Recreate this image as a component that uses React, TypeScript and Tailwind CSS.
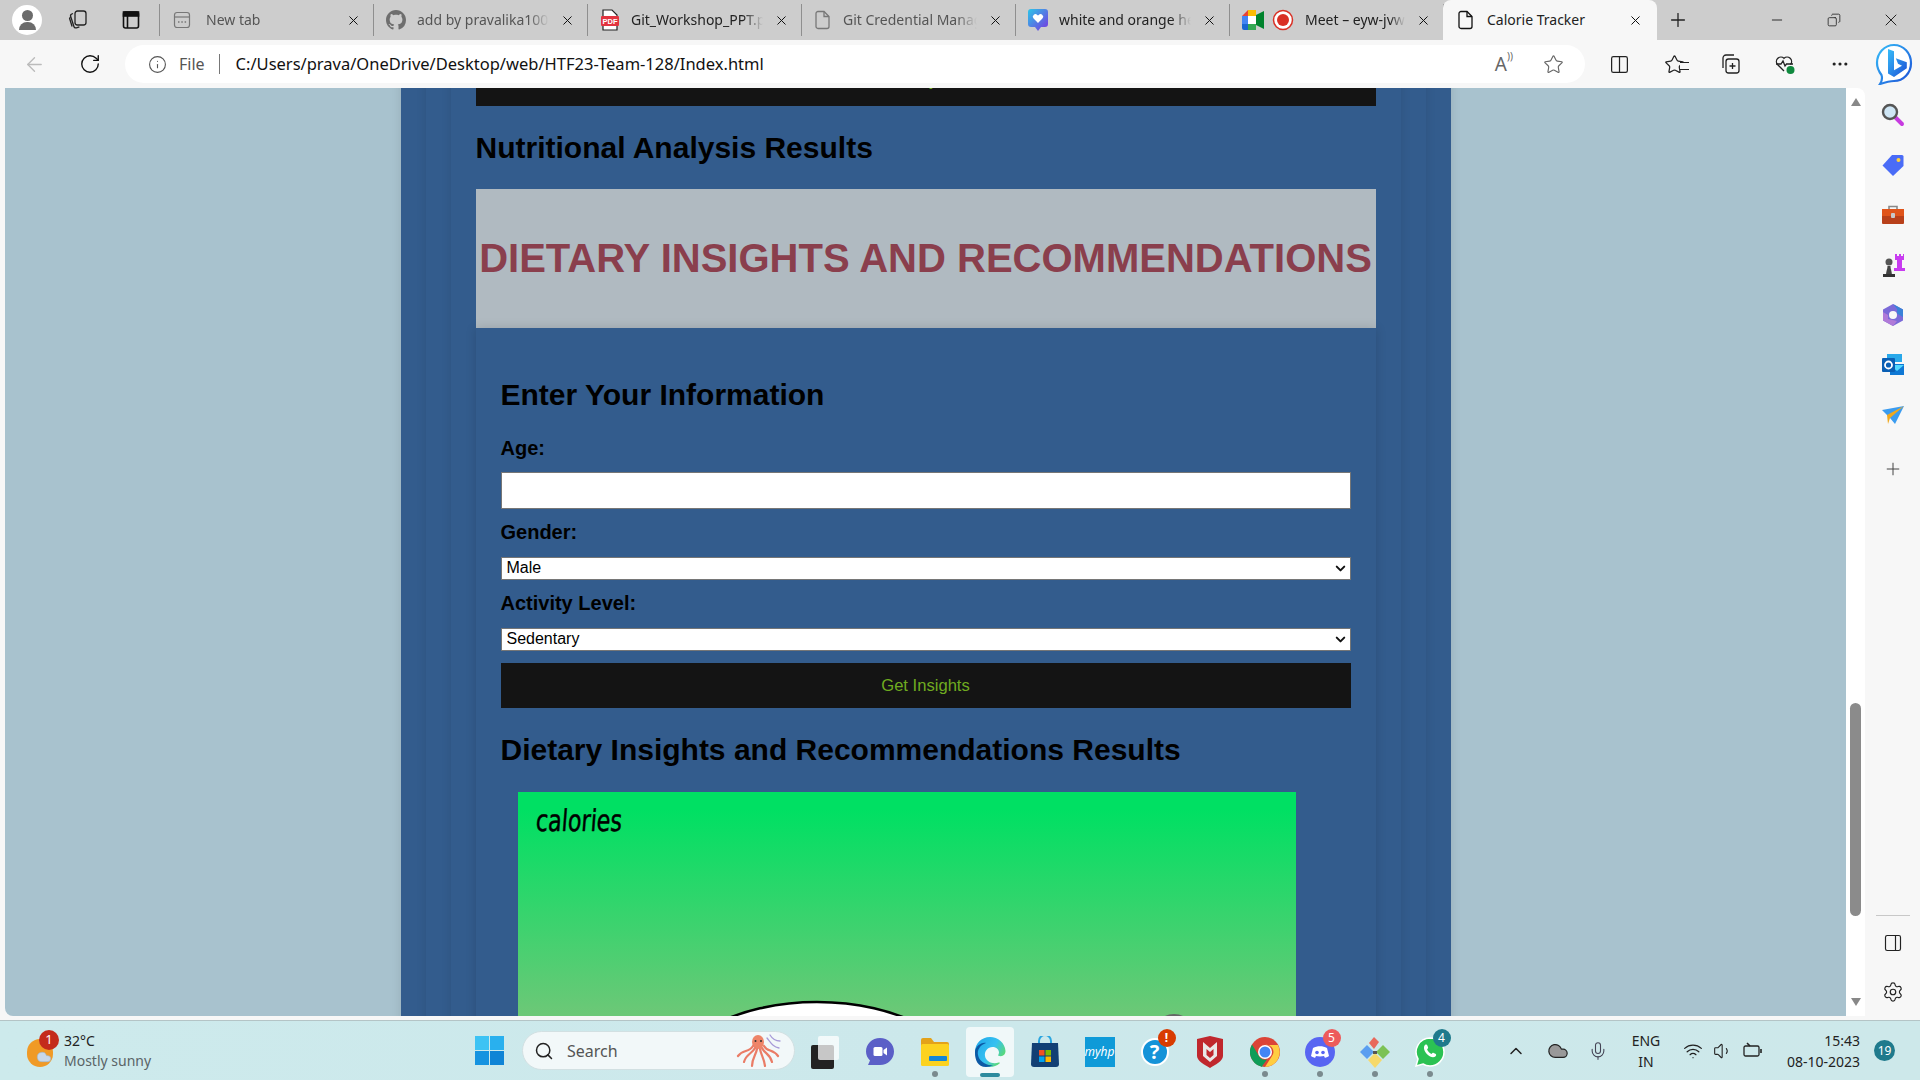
import type { ReactNode } from "react";
import {
  ArrowLeft,
  ChevronDown,
  ChevronUp,
  Cloud,
  Columns2,
  Copy,
  Info,
  Mic,
  Minus,
  MoreHorizontal,
  PanelRight,
  Plus,
  RotateCw,
  Search,
  Settings,
  Star,
  Volume1,
  Wifi,
  X,
} from "lucide-react";

const FileIcon = () => (
  <svg width="18" height="20" viewBox="0 0 18 20" fill="none" stroke="currentColor" strokeWidth="1.3">
    <path d="M4 1.5h6l5 5v10a2 2 0 0 1-2 2H4a2 2 0 0 1-2-2v-13a2 2 0 0 1 2-2z" />
    <path d="M10 1.5v5h5" />
  </svg>
);

const NewTabIcon = () => (
  <svg className="ml-px mr-1" width="18" height="18" viewBox="0 0 18 18" fill="none" stroke="#777" strokeWidth="1.2">
    <rect x="1.5" y="1.5" width="15" height="15" rx="2.5" />
    <path d="M1.5 6h15" />
    <path d="M5 11h1.5M8.3 11h1.5M11.6 11h1.5" strokeWidth="1.6" />
  </svg>
);

const GithubIcon = () => (
  <svg width="20" height="20" viewBox="0 0 16 16" fill="#6e6e6e">
    <path d="M8 0C3.58 0 0 3.58 0 8c0 3.54 2.29 6.53 5.47 7.59.4.07.55-.17.55-.38 0-.19-.01-.82-.01-1.49-2.01.37-2.53-.49-2.69-.94-.09-.23-.48-.94-.82-1.13-.28-.15-.68-.52-.01-.53.63-.01 1.08.58 1.23.82.72 1.21 1.87.87 2.33.66.07-.52.28-.87.51-1.07-1.78-.2-3.64-.89-3.64-3.95 0-.87.31-1.59.82-2.15-.08-.2-.36-1.02.08-2.12 0 0 .67-.21 2.2.82.64-.18 1.32-.27 2-.27s1.36.09 2 .27c1.53-1.04 2.2-.82 2.2-.82.44 1.1.16 1.92.08 2.12.51.56.82 1.27.82 2.15 0 3.07-1.87 3.75-3.65 3.95.29.25.54.73.54 1.48 0 1.07-.01 1.93-.01 2.2 0 .21.15.46.55.38A8.01 8.01 0 0 0 16 8c0-4.42-3.58-8-8-8z" />
  </svg>
);

const PdfIcon = () => (
  <svg width="20" height="22" viewBox="0 0 20 22">
    <path d="M3 1h9l5 5v15H3z" fill="#fff" stroke="#222" strokeWidth="1.2" />
    <rect x="1" y="7" width="18" height="10" rx="1" fill="#e2343f" />
    <text x="10" y="15" textAnchor="middle" fontSize="7.5" fontWeight="700" fill="#fff" fontFamily="Liberation Sans, sans-serif">PDF</text>
  </svg>
);

const HeartBadgeIcon = () => (
  <svg width="20" height="22" viewBox="0 0 20 22">
    <defs>
      <linearGradient id="hb" x1="0" y1="0" x2="1" y2="1">
        <stop offset="0" stopColor="#2bc6e8" />
        <stop offset="1" stopColor="#7a34e0" />
      </linearGradient>
    </defs>
    <path d="M3 0h14a3 3 0 0 1 3 3v12a3 3 0 0 1-3 3h-4l-3 4-3-4H3a3 3 0 0 1-3-3V3a3 3 0 0 1 3-3z" fill="url(#hb)" />
    <path d="M10 14 5.6 9.6a2.6 2.6 0 0 1 3.7-3.7l.7.7.7-.7a2.6 2.6 0 0 1 3.7 3.7z" fill="#fff" />
  </svg>
);

const MeetIcon = () => (
  <svg width="22" height="20" viewBox="0 0 22 20">
    <path d="M0 6 6 0h8v6H6v4H0z" fill="#ea4335" />
    <path d="M6 0h8v6H6z" fill="#fbbc04" />
    <path d="M0 6h6v8H0z" fill="#4285f4" />
    <path d="M0 14h6v6H2a2 2 0 0 1-2-2z" fill="#1967d2" />
    <path d="M6 14h8v6H6z" fill="#34a853" />
    <path d="M14 5l8-4v18l-8-4z" fill="#00832d" />
    <path d="M14 6v8H6V6z" fill="#fff" />
  </svg>
);

const RecordIcon = () => (
  <svg width="22" height="22" viewBox="0 0 22 22">
    <circle cx="11" cy="11" r="9.5" fill="#fff" stroke="#d93025" strokeWidth="1.5" />
    <circle cx="11" cy="11" r="6" fill="#d93025" />
  </svg>
);

const tabs: { title: string; icons: ReactNode[]; text: string; active?: boolean }[] = [
  { title: "New tab", icons: [<NewTabIcon key="n" />], text: "text-[#555]" },
  { title: "add by pravalika100", icons: [<GithubIcon key="g" />], text: "text-[#555]" },
  { title: "Git_Workshop_PPT.pptx", icons: [<PdfIcon key="p" />], text: "text-[#222]" },
  { title: "Git Credential Manager", icons: [<span key="f" className="text-[#777]"><FileIcon /></span>], text: "text-[#555]" },
  { title: "white and orange heart", icons: [<HeartBadgeIcon key="h" />], text: "text-[#222]" },
  { title: "Meet – eyw-jvwx-abc", icons: [<MeetIcon key="m" />, <RecordIcon key="r" />], text: "text-[#222]" },
];

function BrowserTab({ title, icons, text }: { title: string; icons: ReactNode[]; text: string }) {
  return (
    <div className="w-[214px] h-8 flex items-center gap-[11px] pl-3 pr-3 border-r border-[#8f8f8f]">
      <div className="flex items-center gap-2 shrink-0">{icons}</div>
      <span className={`flex-1 min-w-0 whitespace-nowrap overflow-hidden text-[14px] leading-[18px] [mask-image:linear-gradient(to_right,black_85%,transparent)] ${text}`}>
        {title}
      </span>
      <X className="w-[15px] h-[15px] text-[#111] shrink-0" strokeWidth={1.6} />
    </div>
  );
}

function TabBar() {
  return (
    <div className="h-10 shrink-0 bg-[#cdcdcd] flex items-center">
      <div className="w-[54px] flex justify-center">
        <div className="w-[30px] h-[30px] rounded-full bg-white flex flex-col items-center justify-center overflow-hidden">
          <div className="w-[11px] h-[11px] rounded-full bg-[#6b6b6b]" />
          <div className="w-[17px] h-[8px] rounded-t-full bg-[#6b6b6b] mt-[1px]" />
        </div>
      </div>
      <div className="w-12 flex justify-center">
        <svg width="22" height="22" viewBox="0 0 22 22" fill="none" stroke="#222" strokeWidth="1.3">
          <rect x="8" y="2" width="11" height="14" rx="2.5" />
          <path d="M6 4.5 4.8 5a2 2 0 0 0-1.1 2.5l3.2 10a2 2 0 0 0 2.5 1.3l3-1" />
          <path d="M3.4 8 2.6 9.5l2.5 8" />
        </svg>
      </div>
      <div className="w-[57px] flex justify-center">
        <svg width="20" height="20" viewBox="0 0 20 20" fill="none" stroke="#111" strokeWidth="1.6">
          <rect x="2.5" y="2" width="15" height="16" rx="2" />
          <rect x="2.5" y="2" width="15" height="4" fill="#111" />
          <path d="M6.5 6v12" />
        </svg>
      </div>
      {/* divider + inactive tabs */}
      <div className="flex items-center border-l border-[#8f8f8f] h-8">
        {tabs.map((t) => (
          <BrowserTab key={t.title} {...t} />
        ))}
      </div>
      <div className="self-stretch w-[214px] bg-[#f7f7f7] rounded-t-lg flex items-center gap-2 pl-3.5 pr-3.5 -ml-px">
        <span className="text-[#111] shrink-0"><FileIcon /></span>
        <span className="flex-1 text-[14px] leading-[18px] text-[#222] ml-1 whitespace-nowrap">Calorie Tracker</span>
        <X className="w-[15px] h-[15px] text-[#111]" strokeWidth={1.6} />
      </div>
      <div className="w-[42px] flex justify-center">
        <Plus className="w-[22px] h-[22px] text-[#222]" strokeWidth={1.4} />
      </div>
      <div className="flex-1 flex items-center justify-end">
        <div className="w-[57px] flex justify-center"><Minus className="w-4 h-4 text-[#222]" strokeWidth={1.4} /></div>
        <div className="w-[57px] flex justify-center"><Copy className="w-[14px] h-[14px] text-[#222] -scale-x-100" strokeWidth={1.4} /></div>
        <div className="w-[58px] flex justify-center"><X className="w-[20px] h-[20px] text-[#222]" strokeWidth={1.2} /></div>
      </div>
    </div>
  );
}

function ToolbarIcon({ children }: { children: ReactNode }) {
  return <div className="w-[55px] flex justify-center text-[#222]">{children}</div>;
}

function BingIcon() {
  return (
    <svg width="38" height="42" viewBox="0 0 38 42">
      <defs>
        <linearGradient id="bing" x1="0" y1="0" x2="1" y2="1">
          <stop offset="0" stopColor="#37bdf8" />
          <stop offset="1" stopColor="#1b4fd6" />
        </linearGradient>
      </defs>
      <path d="M19 2c9.5 0 17 8 17 18s-7.500 18-17 18c-2.500 0-8 1-14 3 2-3 2.500-6 1.500-9C3.500 28 2 24 2 20 2 10 9.500 2 19 2z" fill="#fff" stroke="url(#bing)" strokeWidth="2.200" />
      <path d="M13 6l6 2.200v19l8-4.500-4-2-2.200-5.500 11 4v6L19 34l-6-3.500z" fill="url(#bing)" />
    </svg>
  );
}

function Toolbar() {
  return (
    <div className="h-12 shrink-0 bg-[#f7f7f7] flex items-center">
      <div className="w-[68px] flex justify-center">
        <ArrowLeft className="w-[23px] h-[23px] text-[#bbb]" strokeWidth={1.4} />
      </div>
      <div className="w-[44px] flex justify-center">
        <RotateCw className="w-[22px] h-[22px] text-[#111]" strokeWidth={1.5} />
      </div>
      <div className="ml-[13px] w-[1460px] h-[38px] bg-white rounded-full flex items-center pl-[23px] pr-[21px]">
        <Info className="w-[19px] h-[19px] text-[#555]" strokeWidth={1.4} />
        <span className="ml-[12px] text-[16px] text-[#555]">File</span>
        <span className="ml-[14px] w-px h-5 bg-[#777]" />
        <span className="ml-[16px] text-[16.5px] text-[#111]">C:/Users/prava/OneDrive/Desktop/web/HTF23-Team-128/Index.html</span>
        <div className="ml-auto flex items-center gap-[30px] text-[#666]">
          <span className="text-[19px] leading-none relative pr-1.5">A<span className="absolute -top-1 right-0 text-[10px]">))</span></span>
          <Star className="w-[21px] h-[21px]" strokeWidth={1.3} />
        </div>
      </div>
      <div className="flex items-center ml-[7px]">
        <ToolbarIcon><Columns2 className="w-[21px] h-[21px]" strokeWidth={1.4} /></ToolbarIcon>
        <ToolbarIcon>
          <div className="relative">
            <Star className="w-[21px] h-[21px]" strokeWidth={1.4} />
            <div className="absolute right-[-4px] top-[8px] w-[9px] h-[8px] border-y border-[#222] bg-[#f7f7f7]" />
          </div>
        </ToolbarIcon>
        <ToolbarIcon>
          <svg width="22" height="22" viewBox="0 0 22 22" fill="none" stroke="#222" strokeWidth="1.3">
            <rect x="7" y="6" width="13" height="14" rx="2.5" />
            <path d="M4 15V5a3 3 0 0 1 3-3h8M13.500 10v6M10.500 13h6" />
          </svg>
        </ToolbarIcon>
        <ToolbarIcon>
          <svg width="24" height="24" viewBox="0 0 24 24" fill="none" stroke="#222" strokeWidth="1.3">
            <path d="M11 19 4.500 12.500a4.500 4.500 0 0 1 6.500-6.200 4.500 4.500 0 0 1 6.500 6.200" />
            <path d="M3 12h5l2-3 2 5 1.500-2H20" />
            <circle cx="17.500" cy="18" r="4" fill="#10893e" stroke="none" />
          </svg>
        </ToolbarIcon>
        <ToolbarIcon><MoreHorizontal className="w-[20px] h-[20px]" strokeWidth={1.8} /></ToolbarIcon>
        <div className="w-[53px] flex justify-center"><BingIcon /></div>
      </div>
    </div>
  );
}

function SelectField({ value, other }: { value: string; other: string }) {
  return (
    <div className="relative mt-[13px] w-[850px] h-[23px]">
      <select defaultValue={value} className="block w-full h-full appearance-none bg-white border border-[#767676] text-[16px] leading-[18px] text-black pl-[5px] pb-[2px]">
        <option>{value}</option>
        <option>{other}</option>
      </select>
      <ChevronDown className="absolute right-[3px] top-[4px] w-[15px] h-[15px] text-[#111] pointer-events-none" strokeWidth={3.2} />
    </div>
  );
}

function InsightsForm() {
  return (
    <div className="px-[25px] pt-12 shadow-[0_0_10px_rgba(0,0,0,0.15)]">
      <h2 className="text-[30px] leading-[37px] font-bold text-black">Enter Your Information</h2>
      <label className="block mt-[24px] text-[20px] leading-[23px] font-bold text-black">Age:</label>
      <input type="text" className="block mt-[12px] w-[850px] h-[37px] bg-white border border-[#767676]" />
      <label className="block mt-[12px] text-[20px] leading-[23px] font-bold text-black">Gender:</label>
      <SelectField value="Male" other="Female" />
      <label className="block mt-[12px] text-[20px] leading-[23px] font-bold text-black">Activity Level:</label>
      <SelectField value="Sedentary" other="Active" />
      <button className="block mt-3 w-[850px] h-[45px] pt-px bg-[#141414] text-[16.6px] text-[#6fab20]">Get Insights</button>
      <h2 className="mt-[23px] text-[30px] leading-[37px] font-bold text-black">Dietary Insights and Recommendations Results</h2>
      <div className="relative mt-6 ml-[17px] w-[778px] h-[300px] bg-[linear-gradient(to_bottom,#00e063_0%,#00e063_6%,#6cc877_74%)] pl-[18px] pt-[10px]">
        <span className="block origin-left scale-x-[0.74] -skew-x-6 text-[30px] leading-[38px] font-['DejaVu_Sans',sans-serif] text-black [-webkit-text-stroke:0.5px_black]">calories</span>
        {/* chart shapes, cut off by the fold */}
        <svg className="absolute left-0 top-0" width="778" height="300" viewBox="0 0 778 300">
          <ellipse cx="299" cy="300" rx="155" ry="90" fill="#fff" stroke="#000" strokeWidth="2.5" />
          <ellipse cx="656" cy="232" rx="15" ry="10" fill="#666" />
        </svg>
      </div>
    </div>
  );
}

function Page() {
  return (
    <div className="flex-1 min-w-0 overflow-hidden bg-[#a8c2ce]">
      <div className="mx-auto w-[1050px] px-[25px] bg-[#335c8d] shadow-[0_0_10px_rgba(0,0,0,0.1)]">
        <div className="px-[25px] shadow-[0_0_10px_rgba(0,0,0,0.1)]">
          <div className="px-[25px] shadow-[0_0_10px_rgba(0,0,0,0.1)]">
            <div className="-mt-[27px]">
              <button className="block w-[900px] h-[45px] pb-1.5 bg-[#141414] text-[16px] text-[#6fab20]">Analyze</button>
              <h2 className="mt-[23px] text-[30px] leading-[37px] font-bold text-black">Nutritional Analysis Results</h2>
              <div className="mt-[23px] h-[139px] pb-[2px] bg-[#b0bac1] flex items-center justify-center">
                <h1 className="text-[40px] font-bold text-[#8a3f4d] whitespace-nowrap">DIETARY INSIGHTS AND RECOMMENDATIONS</h1>
              </div>
              <InsightsForm />
            </div>
          </div>
        </div>
      </div>
    </div>
  );
}

function Scrollbar() {
  return (
    <div className="w-[19px] shrink-0 bg-white flex flex-col items-center py-[10px]">
      <div className="w-0 h-0 border-x-[5px] border-x-transparent border-b-[8px] border-b-[#888]" />
      <div className="mt-[597px] w-[11px] h-[213px] rounded-full bg-[#8b8b8b]" />
      <div className="mt-auto w-0 h-0 border-x-[5px] border-x-transparent border-t-[8px] border-t-[#888]" />
    </div>
  );
}

function SideBar() {
  return (
    <div className="w-[55px] shrink-0 flex flex-col items-center pt-[2px] pb-[17px]">
      <div className="h-[50px] flex items-center justify-center">
        <svg width="24" height="24" viewBox="0 0 24 24">
          <path d="M14 14l7 7" stroke="#c73be0" strokeWidth="4" strokeLinecap="round" />
          <circle cx="9" cy="9" r="7" fill="#cfe6f5" stroke="#555" strokeWidth="2.4" />
        </svg>
      </div>
      <div className="h-[50px] flex items-center justify-center">
        <svg width="24" height="24" viewBox="0 0 24 24">
          <path d="M11 2h10a1.500 1.500 0 0 1 1.500 1.500V13L12 23 1.500 12.500z" fill="#4a6cf7" />
          <circle cx="17.500" cy="7" r="2" fill="#ffd23f" />
        </svg>
      </div>
      <div className="h-[50px] flex items-center justify-center">
        <svg width="24" height="22" viewBox="0 0 24 22">
          <path d="M8 5V2.500h8V5" fill="none" stroke="#888" strokeWidth="1.6" />
          <path d="M1 5h22v7H1z" fill="#e0541a" />
          <path d="M1 12h22v7a1 1 0 0 1-1 1H2a1 1 0 0 1-1-1z" fill="#b8401a" />
          <rect x="10" y="9" width="4" height="5" rx="1" fill="#c8c8c8" />
        </svg>
      </div>
      <div className="h-[50px] flex items-center justify-center">
        <svg width="24" height="24" viewBox="0 0 24 24">
          <circle cx="8" cy="9" r="3.500" fill="#555" />
          <path d="M5 23c0-5 1.500-7 1.500-10h3c0 3 1.500 5 1.500 10z" fill="#444" />
          <path d="M2 21h12v3H2z" fill="#333" />
          <path d="M14 1h2v2h2V1h2v2h2V1h1v6h-2v8h3v3H13v-3h3V7h-2z" fill="#c83cf0" />
        </svg>
      </div>
      <div className="h-[50px] flex items-center justify-center">
        <svg width="24" height="24" viewBox="0 0 24 24">
          <path d="M12 1 22 6.500v11L12 23 2 17.500v-11z" fill="#7b6ad8" />
          <path d="M12 1 22 6.500V14l-6-3.500V6z" fill="#3a82d8" />
          <path d="M2 17.500V9l5 3v4l9 2-4 5z" fill="#b07ad8" />
          <circle cx="12" cy="12" r="4" fill="#f7f7f7" />
        </svg>
      </div>
      <div className="h-[50px] flex items-center justify-center">
        <svg width="24" height="24" viewBox="0 0 24 24">
          <rect x="6" y="1" width="15" height="8" fill="#28a8ea" />
          <path d="M9 11 23 11v11H9z" fill="#0f78d4" />
          <path d="M9 12l14 0-7 6z" fill="#50d9ff" />
          <rect x="1" y="5" width="13" height="14" rx="1" fill="#0a5fb4" />
          <circle cx="7.500" cy="12" r="3.500" fill="none" stroke="#fff" strokeWidth="1.800" />
        </svg>
      </div>
      <div className="h-[50px] flex items-center justify-center">
        <svg width="24" height="20" viewBox="0 0 24 20">
          <path d="M1 5 23 1 14 19 9 13z" fill="#3b9cf0" />
          <path d="M6 10 23 1 9 13l-2 6z" fill="#f0a91e" />
        </svg>
      </div>
      <div className="h-[58px] flex items-center justify-center">
        <Plus className="w-[20px] h-[20px] text-[#444]" strokeWidth={1.2} />
      </div>
      <div className="mt-auto w-[34px] h-px bg-[#c8c8c8]" />
      <div className="mt-[17px]"><PanelRight className="w-[20px] h-[20px] text-[#222]" strokeWidth={1.4} /></div>
      <div className="mt-[28px]"><Settings className="w-[22px] h-[22px] text-[#222]" strokeWidth={1.3} /></div>
    </div>
  );
}

function TaskIcon({ children, dot, active, badge, badgeColor }: { children: ReactNode; dot?: boolean; active?: boolean; badge?: string; badgeColor?: string }) {
  return (
    <div className={`relative w-[48px] mx-[3.500px] h-[50px] flex items-center justify-center rounded ${active ? "bg-white/70" : ""}`}>
      {children}
      {badge && (
        <div className={`absolute top-[2px] right-[3px] w-[18px] h-[18px] rounded-full text-white text-[12px] flex items-center justify-center ${badgeColor}`}>
          {badge}
        </div>
      )}
      {dot && <div className="absolute bottom-0 w-[6px] h-[6px] rounded-full bg-[#7a8a8e]" />}
      {active && <div className="absolute bottom-0 w-[20px] h-[4px] rounded-full bg-[#2b8a9e]" />}
    </div>
  );
}

function Taskbar() {
  return (
    <div className="h-[60px] shrink-0 bg-[linear-gradient(to_right,#cdeaec,#cce8eb_50%,#cde8ea)] border-t border-[#b4c4c6] flex items-center relative">
      <div className="w-[475px] shrink-0 flex items-center pl-[27px]">
        <div className="relative w-[37px] h-[32px]">
          <div className="absolute left-0 top-1 w-[26px] h-[28px] rounded-full bg-[#f09a26]" />
          <Cloud className="absolute left-[8px] top-[14px] w-[18px] h-[16px] text-[#9fb9d4] fill-[#c8d8ea]" strokeWidth={1} />
          <div className="absolute left-[12px] -top-[5px] w-5 h-5 rounded-full bg-[#c42b1c] text-white text-[13px] flex items-center justify-center">1</div>
        </div>
        <div className="text-[14px] leading-[20px] pt-[1px]">
          <div className="text-[#222]">32°C</div>
          <div className="text-[#5a6467]">Mostly sunny</div>
        </div>
      </div>
      <div className="w-[47px] shrink-0">
        <svg width="29" height="29" viewBox="0 0 29 29">
          <rect x="0" y="0" width="14" height="14" fill="#3cc3f4" />
          <rect x="15" y="0" width="14" height="14" fill="#29b0ee" />
          <rect x="0" y="15" width="14" height="14" fill="#1593e0" />
          <rect x="15" y="15" width="14" height="14" fill="#0f84d6" />
        </svg>
      </div>
      <div className="w-[273px] h-[39px] shrink-0 bg-[#f2f8f9] rounded-full border border-[#d2e0e2] flex items-center pl-[11px] pr-[10px]">
        <Search className="w-[20px] h-[20px] text-[#222]" strokeWidth={1.8} />
        <span className="ml-[13px] text-[16px] text-[#555]">Search</span>
        <svg className="ml-auto" width="50" height="38" viewBox="0 0 50 38" fill="none" stroke="#ea7c66" strokeWidth="2.200" strokeLinecap="round">
          <path d="M33 6c4 5 6 9 12 10M36 3c3 5 6 6 10 6" stroke="#a79ad8" strokeWidth="1.300" />
          <ellipse cx="24" cy="10" rx="6" ry="7" fill="#ee8468" stroke="none" />
          <path d="M19 14c-4 7-10 3-15 10M21 16c-3 6-9 6-11 14M23 17c-1 6-5 9-5 17M26 17c1 6 4 9 5 17M28 16c3 6 8 6 10 14M30 14c3 6 9 3 14 10" />
          <circle cx="21.500" cy="9" r="1" fill="#333" stroke="none" />
          <circle cx="27" cy="9" r="1" fill="#333" stroke="none" />
        </svg>
      </div>
      <div className="flex items-center ml-[2px] pt-[2px]">
        <TaskIcon>
          <svg width="30" height="36" viewBox="0 0 30 36">
            <rect x="1" y="11" width="23" height="24" rx="2" fill="#222" />
            <rect x="8" y="2" width="21" height="24" rx="2" fill="#fff" opacity="0.75" />
          </svg>
        </TaskIcon>
        <TaskIcon>
          <svg width="30" height="30" viewBox="0 0 30 30">
            <path d="M15 1c8 0 14 6 14 13.500S23 28 15 28H3l2-4.500C2.500 21 1 18 1 14.500 1 7 7 1 15 1z" fill="#5b5fc7" />
            <rect x="8.500" y="10" width="9" height="9" rx="1.500" fill="#fff" />
            <path d="M18.500 13 22 10.500v8L18.500 16z" fill="#fff" />
          </svg>
        </TaskIcon>
        <TaskIcon dot>
          <svg width="30" height="30" viewBox="0 0 30 30">
            <path d="M1 3a2 2 0 0 1 2-2h8l3 4h13a2 2 0 0 1 2 2v3H1z" fill="#e3a21a" />
            <rect x="1" y="7" width="28" height="22" rx="1.500" fill="#fcd21f" />
            <rect x="9" y="19" width="18" height="5" rx="1" fill="#1586d6" />
          </svg>
        </TaskIcon>
        <TaskIcon active>
          <svg width="32" height="32" viewBox="0 0 32 32">
            <defs>
              <linearGradient id="edge" x1="0" y1="0" x2="1" y2="0.600">
                <stop offset="0" stopColor="#1fa5e8" />
                <stop offset="0.600" stopColor="#35c1f1" />
                <stop offset="1" stopColor="#5fdc6a" />
              </linearGradient>
            </defs>
            <path d="M16 1C7.500 1 1 7.500 1 16c0 8.500 6.500 15 15 15 3.500 0 7-1.300 9.500-3.500.7-.7 0-1.300-.8-1-5.700 2-12.700-.5-13.700-6.500-.8-5 3-9 7.500-9 4 0 6.500 2.500 6.500 5.500 0 1-.5 2-1 3 4 2 7.500-.5 7.500-4.500C31 7 24 1 16 1z" fill="url(#edge)" />
            <path d="M1 16c0-5 6-10 11-9-6 2-9 7-8 12 1 6 8 11 15 10-2 1-4 2-7 2-8.500 0-11-7-11-15z" fill="#0c59a4" />
          </svg>
        </TaskIcon>
        <TaskIcon>
          <svg width="30" height="32" viewBox="0 0 30 32">
            <path d="M9 8V5a6 6 0 0 1 12 0v3" fill="none" stroke="#2aa5e0" strokeWidth="2" />
            <path d="M2 7h26l1 21a3 3 0 0 1-3 3H4a3 3 0 0 1-3-3z" fill="#123f74" />
            <rect x="9" y="14" width="5.500" height="5.500" fill="#f25022" />
            <rect x="15.500" y="14" width="5.500" height="5.500" fill="#7fba00" />
            <rect x="9" y="20.500" width="5.500" height="5.500" fill="#00a4ef" />
            <rect x="15.500" y="20.500" width="5.500" height="5.500" fill="#ffb900" />
          </svg>
        </TaskIcon>
        <TaskIcon>
          <div className="w-[30px] h-[30px] bg-[#0f9ad8] flex items-center justify-center text-white text-[12px] italic">myhp</div>
        </TaskIcon>
        <TaskIcon badge="!" badgeColor="bg-[#d83b01] font-bold top-[0px]">
          <div className="w-[28px] h-[28px] rounded-full bg-[#1593d8] border-2 border-white text-white text-[20px] font-bold flex items-center justify-center">?</div>
        </TaskIcon>
        <TaskIcon>
          <svg width="28" height="32" viewBox="0 0 28 32">
            <path d="M1 3 14 0l13 3v17c0 5-8 9-13 12C9 29 1 25 1 20z" fill="#c0272d" />
            <path d="M7 6l7 6 7-6v14l-7 6-7-6z" fill="#e8e8e8" />
            <path d="M10.500 13l3.500 3 3.500-3v6L14 22l-3.500-3z" fill="#c0272d" />
          </svg>
        </TaskIcon>
        <TaskIcon dot>
          <svg width="30" height="30" viewBox="0 0 30 30">
            <circle cx="15" cy="15" r="15" fill="#db4437" />
            <path d="M15 30A15 15 0 0 1 2 7.500L9 19a7 7 0 0 0 8 3.500L11.500 30z" fill="#0f9d58" />
            <path d="M15 8h13a15 15 0 0 1-13 22l7-11a7 7 0 0 0-7-11z" fill="#ffcd40" />
            <circle cx="15" cy="15" r="7" fill="#fff" />
            <circle cx="15" cy="15" r="5.500" fill="#4285f4" />
          </svg>
        </TaskIcon>
        <TaskIcon dot badge="5" badgeColor="bg-[#ed5b5b]">
          <svg width="30" height="30" viewBox="0 0 30 30">
            <circle cx="15" cy="15" r="15" fill="#5865f2" />
            <path d="M8 11c4-2.500 10-2.500 14 0l2 8c-1.500 1-3 1.500-4 2l-1-2c-2 .6-6 .6-8 0l-1 2c-1-.5-2.500-1-4-2z" fill="#fff" />
            <circle cx="12" cy="15.500" r="1.800" fill="#5865f2" />
            <circle cx="18" cy="15.500" r="1.800" fill="#5865f2" />
          </svg>
        </TaskIcon>
        <TaskIcon dot>
          <svg width="32" height="32" viewBox="0 0 32 32">
            <path d="M1 16l7-7 7 7-7 7z" fill="#5b9ef0" />
            <path d="M17 16l7-7 7 7-7 7z" fill="#7cc255" />
            <path d="M9 24l7-7 7 7-7 8z" fill="#f6d96a" />
            <path d="M10 7l5-6 5 5-5 7z" fill="#e8685b" />
            <path d="M14 15h4v3h-4z" fill="#555" />
          </svg>
        </TaskIcon>
        <TaskIcon dot badge="4" badgeColor="bg-[#1f7a8c]">
          <svg width="30" height="30" viewBox="0 0 30 30">
            <path d="M15 1a14 14 0 0 1 0 28c-2.500 0-5-.7-7-2l-7 2 2-7A14 14 0 0 1 15 1z" fill="#2bc253" stroke="#fff" strokeWidth="1.500" />
            <path d="M10 8c1-.8 2-.5 2.500.8l.6 1.600c.2.700-.7 1.500-1 2 1 2 2.500 3.500 4.500 4.500.6-.5 1.300-1.300 2-1l1.800.8c1 .5 1 1.700.2 2.500-2 2-5.500 1-8.500-2S8 10 10 8z" fill="#fff" />
          </svg>
        </TaskIcon>
      </div>
      <div className="ml-auto flex items-center h-full text-[#222]">
        <ChevronUp className="w-[20px] h-[20px] mr-[21px]" strokeWidth={1.8} />
        <Cloud className="w-[22px] h-[22px] mr-[19px] fill-[#999] text-[#222]" strokeWidth={1.3} />
        <Mic className="w-[20px] h-[20px] mr-[21px] text-[#445]" strokeWidth={1.3} />
        <div className="w-[34px] text-center text-[14px] leading-[21px] mr-[20px]">ENG<br />IN</div>
        <Wifi className="w-[20px] h-[20px] mr-[10px]" strokeWidth={1.5} />
        <Volume1 className="w-[20px] h-[20px] mr-[8px]" strokeWidth={1.3} />
        <svg className="mr-[11px]" width="22" height="20" viewBox="0 0 22 20" fill="none" stroke="#222" strokeWidth="1.300">
          <rect x="3" y="5" width="15" height="10" rx="1.500" />
          <path d="M20 8v4M6 2 9 5" strokeWidth="1.600" />
        </svg>
        <div className="w-[86px] text-right text-[14px] leading-[21px]">15:43<br />08-10-2023</div>
        <div className="ml-[14px] mr-[25px] w-[21px] h-[21px] rounded-full bg-[#1f7a8c] text-white text-[12px] flex items-center justify-center">19</div>
      </div>
    </div>
  );
}

export default function App() {
  return (
    <div className="w-[1920px] h-[1080px] flex flex-col overflow-hidden bg-[#f7f7f7] font-['Noto_Sans',sans-serif]">
      <TabBar />
      <Toolbar />
      <div className="flex-1 min-h-0 flex">
        <div className="ml-[5px] flex-1 min-w-0 flex overflow-hidden rounded-tr-lg rounded-bl-lg mb-[4px] font-['Liberation_Sans',sans-serif]">
          <Page />
          <Scrollbar />
        </div>
        <SideBar />
      </div>
      <Taskbar />
    </div>
  );
}
